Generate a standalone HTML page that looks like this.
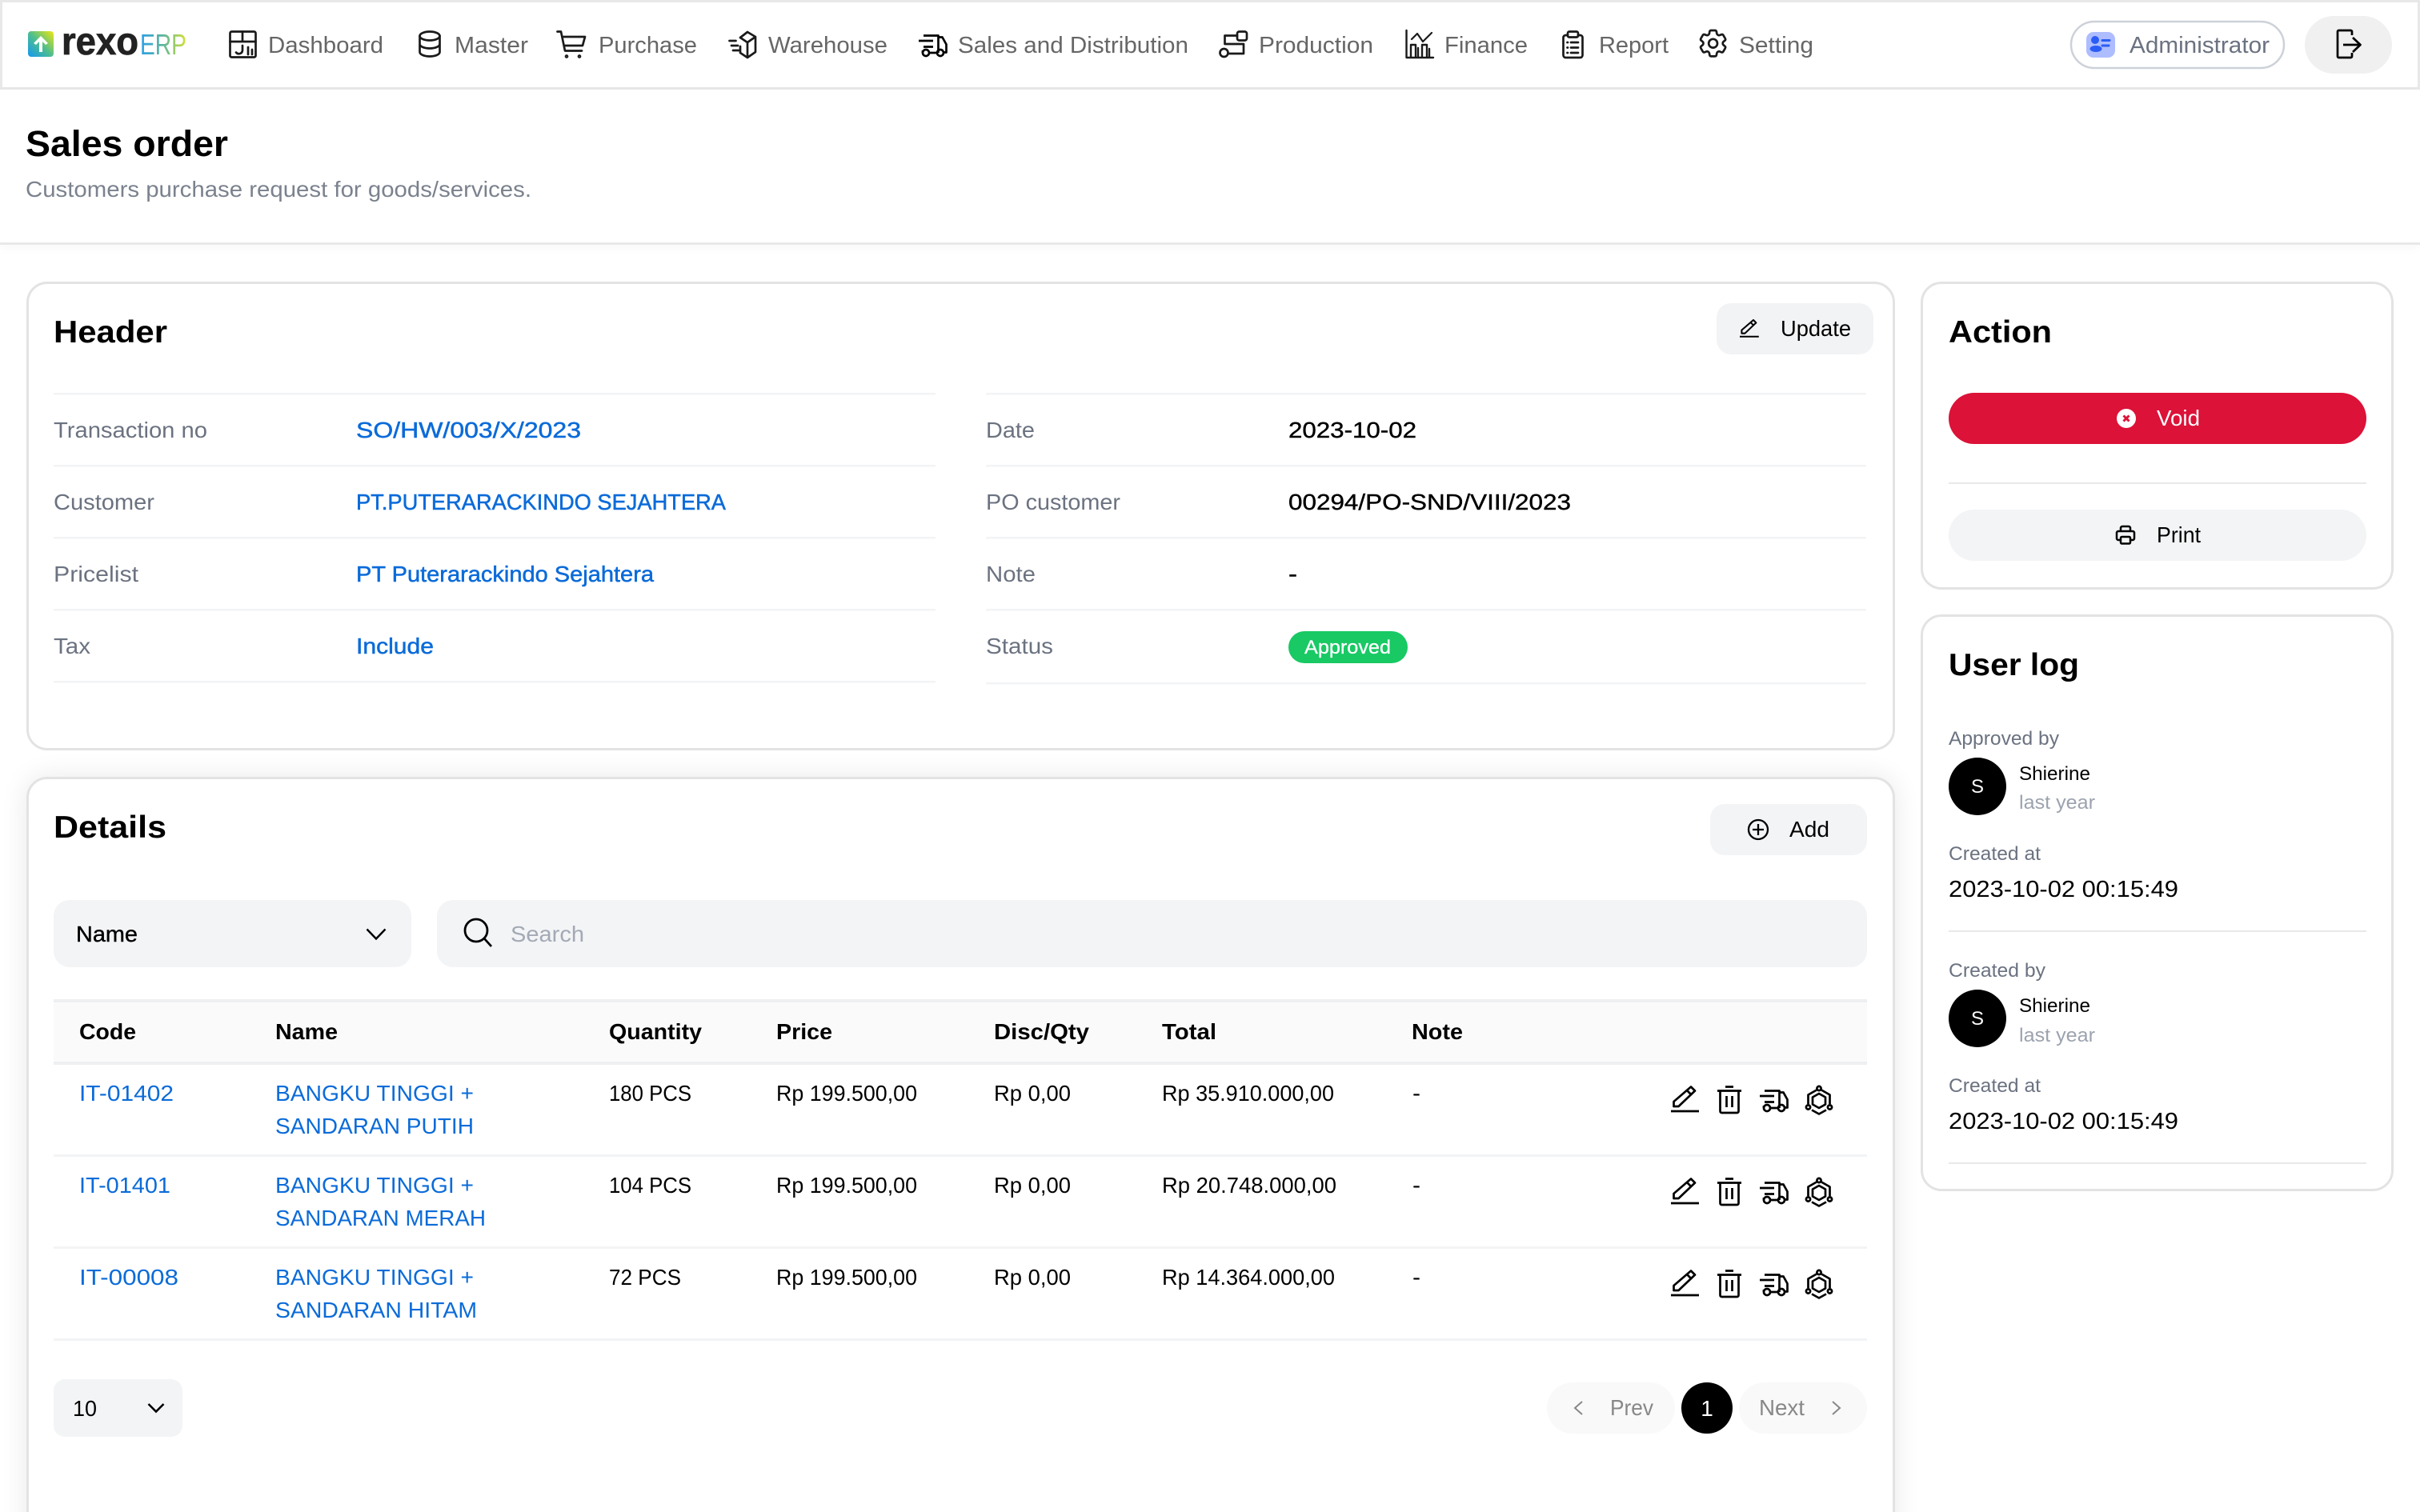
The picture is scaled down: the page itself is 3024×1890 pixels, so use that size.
<!DOCTYPE html>
<html lang="en"><head><meta charset="utf-8"><title>Sales order</title>
<style>
html,body{margin:0;padding:0;background:#fff;width:3024px;height:1890px;overflow:hidden}
#w{position:relative;width:3024px;height:1890px;overflow:hidden;background:#fff}
.a{position:absolute;box-sizing:border-box}
svg{position:absolute;left:0;top:0;display:block}
text{font-family:"Liberation Sans",sans-serif;font-size:28px;fill:#000}
.nav{fill:#666;font-size:28.5px}
.lab{fill:#6b7280}
.blue{fill:#0b6bd9}
.bm{fill:#0b6bd9;stroke:#0b6bd9;stroke-width:.5px}
.k{stroke:#000;stroke-width:.4px}
.t{font-weight:700;font-size:39px}
.s{font-size:24px}
.i{fill:none;stroke:#1a1a1a;stroke-width:2.700;stroke-linecap:round;stroke-linejoin:round}
.b{fill:none;stroke:#000;stroke-width:2.700;stroke-linecap:butt;stroke-linejoin:round}
</style></head><body><div id="w">
<div class="a" style="left:0;top:0;width:3024px;height:112px;background:#fff;border:3px solid #e8e8e8"></div>
<div class="a" style="left:0;top:112px;width:3024px;height:194px;background:#fff;border-bottom:3px solid #e9e9e9;box-shadow:0 3px 12px rgba(0,0,0,.035)"></div>
<div class="a" style="left:33px;top:352px;width:2335px;height:586px;background:#fff;border:3px solid #e3e3e3;border-radius:26px"></div>
<div class="a" style="left:33px;top:971px;width:2335px;height:1000px;background:#fff;border:3px solid #e3e3e3;border-radius:26px;box-shadow:0 0 34px rgba(0,0,0,.09)"></div>
<div class="a" style="left:2400px;top:352px;width:591px;height:385px;background:#fff;border:3px solid #e3e3e3;border-radius:26px"></div>
<div class="a" style="left:2400px;top:768px;width:591px;height:721px;background:#fff;border:3px solid #e3e3e3;border-radius:26px"></div>

<svg width="3024" height="1890" viewBox="0 0 3024 1890" xmlns="http://www.w3.org/2000/svg">
<defs>
<linearGradient id="lg" x1="0" y1="1" x2="1" y2="0"><stop offset="0" stop-color="#1597f2"/><stop offset=".5" stop-color="#4fbf8c"/><stop offset="1" stop-color="#eee60f"/></linearGradient>
<linearGradient id="eg" gradientUnits="userSpaceOnUse" x1="175" y1="0" x2="233" y2="0"><stop offset="0" stop-color="#2b9fe8"/><stop offset=".5" stop-color="#5db59a"/><stop offset="1" stop-color="#d5e235"/></linearGradient>
<g id="pen"><path class="b" d="M3.500 26h6L30 6.500 25 1.500 3.500 20zM20 6l5.500 5.500"/><path class="b" d="M0 32h35"/></g>
<g id="trash"><path class="b" d="M10 1.500h10M0 6.500h30M3.500 6.500V32a2 2 0 0 0 2 2h19a2 2 0 0 0 2-2V6.500M11.500 13v14M18.500 13v14"/></g>
<g id="truck"><path class="b" d="M6 1.500h18.500V23M0 8h18M6 15.500h12M13 23h10M5 23V20M25 3.500h4.500l5 9V22.500h-3"/><circle class="b" cx="9" cy="23" r="4"/><circle class="b" cx="27" cy="23" r="4"/></g>
<g id="hex"><path class="b" d="M17 10l8 4.500v9L17 28l-8-4.500v-9z"/><circle class="b" cx="17" cy="3.500" r="2.600"/><circle class="b" cx="3.500" cy="27" r="2.600"/><circle class="b" cx="30.500" cy="27" r="2.600"/><path class="b" d="M20 5.500l10.500 6V23M14 5.500L3.500 11.500V23M8 30.500l9 5 9-5"/></g>
</defs>

<!-- logo -->
<rect x="35" y="39" width="32" height="32" rx="4" fill="url(#lg)"/>
<path d="M51 45l9 9-3 2-4-4v13h-4V52l-4 4-3-2z" fill="#fff"/>
<text x="77" y="68" textLength="96" lengthAdjust="spacingAndGlyphs" style="font-size:48px;font-weight:700;fill:#222;stroke:#222;stroke-width:.8px">rexo</text>
<text x="175" y="68" textLength="58" lengthAdjust="spacingAndGlyphs" style="font-size:36px;fill:url(#eg)">ERP</text>

<!-- nav icons -->
<g class="i" transform="translate(286,38)"><rect x="1.500" y="1.500" width="32" height="32" rx="2"/><path d="M1.500 14h32M17 1.500V14M17 19v6a4.500 4.500 0 0 1-8 2.500M24 21v9M29 24v6"/></g>
<g class="i" transform="translate(523,38)"><ellipse cx="14" cy="7" rx="12.500" ry="5.500"/><path d="M1.500 7v20c0 3 5.500 5.500 12.500 5.500S26.500 30 26.500 27V7M1.500 17c0 3 5.500 5.500 12.500 5.500S26.500 20 26.500 17"/></g>
<g class="i" transform="translate(695,38)"><path d="M1.500 1.500h4.500l5 24h21M8 8h28l-3 11H10"/><circle cx="13" cy="32.500" r="1"/><circle cx="29" cy="32.500" r="1"/></g>
<g class="i" transform="translate(910,38)"><path d="M24 2l10 6v19l-10 7-9-6v-8M15 9l9-7M15 9l9 6 10-7M24 15v19M1.500 13h8M4 19h8M6 25h7"/></g>
<g transform="translate(1148,43)"><use href="#truck"/></g>
<g class="i" transform="translate(1523,38)"><rect x="23" y="1.500" width="12" height="11" rx="2.500"/><circle cx="6.500" cy="28" r="5"/><path d="M23 6.500H7.500V17h23.500v12H12"/></g>
<g class="i" transform="translate(1756,38)"><path d="M1.500 0v34H35M7 34V18h6v16M16 34V22M21 34V18h6v16M30 34V23" stroke-width="2.400"/><path d="M8 11l7-7 7 10 11-11" stroke-width="2.200"/></g>
<g class="i" transform="translate(1952,38)"><path d="M7 6H4.500a3 3 0 0 0-3 3v22a3 3 0 0 0 3 3h18a3 3 0 0 0 3-3V9a3 3 0 0 0-3-3H20"/><rect x="7" y="1.500" width="13" height="7" rx="2"/><path d="M11 15h9M11 21.500h9M11 28h9M6.500 15h.5M6.500 21.500h.5M6.500 28h.5"/></g>
<g transform="translate(2119,32.600) scale(1.800)" fill="none" stroke="#1a1a1a" stroke-width="1.500" stroke-linejoin="round"><path d="M9.594 3.940c.09-.542.56-.94 1.110-.94h2.593c.55 0 1.020.398 1.110.94l.213 1.281c.063.374.313.686.645.87.074.04.147.083.22.127.324.196.72.257 1.075.124l1.217-.456a1.125 1.125 0 0 1 1.370.49l1.296 2.247a1.125 1.125 0 0 1-.26 1.431l-1.003.827c-.293.24-.438.613-.431.992a6.759 6.759 0 0 1 0 .255c-.007.378.138.75.43.99l1.005.828c.424.35.534.954.26 1.430l-1.298 2.247a1.125 1.125 0 0 1-1.369.491l-1.217-.456c-.355-.133-.75-.072-1.076.124a6.570 6.570 0 0 1-.22.128c-.331.183-.581.495-.644.869l-.213 1.280c-.09.543-.56.941-1.110.941h-2.594c-.55 0-1.020-.398-1.110-.94l-.213-1.281c-.062-.374-.312-.686-.644-.87a6.520 6.520 0 0 1-.22-.127c-.325-.196-.72-.257-1.076-.124l-1.217.456a1.125 1.125 0 0 1-1.369-.49l-1.297-2.247a1.125 1.125 0 0 1 .26-1.431l1.004-.827c.292-.24.437-.613.43-.992a6.932 6.932 0 0 1 0-.255c.007-.378-.138-.75-.43-.99l-1.004-.828a1.125 1.125 0 0 1-.26-1.430l1.297-2.247a1.125 1.125 0 0 1 1.370-.491l1.216.456c.356.133.751.072 1.076-.124.072-.044.146-.087.22-.128.332-.183.582-.495.644-.869l.214-1.281z"/><circle cx="12" cy="12" r="3"/></g>

<!-- nav text -->
<text class="nav" x="335" y="66" textLength="144" lengthAdjust="spacingAndGlyphs">Dashboard</text>
<text class="nav" x="568" y="66" textLength="92" lengthAdjust="spacingAndGlyphs">Master</text>
<text class="nav" x="748" y="66" textLength="123" lengthAdjust="spacingAndGlyphs">Purchase</text>
<text class="nav" x="960" y="66" textLength="149" lengthAdjust="spacingAndGlyphs">Warehouse</text>
<text class="nav" x="1197" y="66" textLength="288" lengthAdjust="spacingAndGlyphs">Sales and Distribution</text>
<text class="nav" x="1573" y="66" textLength="143" lengthAdjust="spacingAndGlyphs">Production</text>
<text class="nav" x="1805" y="66" textLength="104" lengthAdjust="spacingAndGlyphs">Finance</text>
<text class="nav" x="1998" y="66" textLength="87" lengthAdjust="spacingAndGlyphs">Report</text>
<text class="nav" x="2173" y="66" textLength="93" lengthAdjust="spacingAndGlyphs">Setting</text>

<!-- admin -->
<rect x="2588" y="27" width="266" height="58" rx="29" fill="#fff" stroke="#cdd1d9" stroke-width="2.500"/>
<rect x="2607" y="40" width="36" height="32" rx="9" fill="#aebdff"/>
<circle cx="2618" cy="50" r="5" fill="#2b5cf5"/><ellipse cx="2619" cy="61" rx="7.500" ry="4" fill="#2b5cf5"/>
<path d="M2627 50.500h9M2627 57h8" stroke="#2b5cf5" stroke-width="3" stroke-linecap="round"/>
<text x="2661" y="66" textLength="175" lengthAdjust="spacingAndGlyphs" style="fill:#6b7280;font-size:29px">Administrator</text>
<rect x="2880" y="20" width="109" height="72" rx="36" fill="#f0f0f0"/>
<path class="b" d="M2939 44v-4.500a1.500 1.500 0 0 0-1.500-1.500h-15a1.500 1.500 0 0 0-1.500 1.500v31a1.500 1.500 0 0 0 1.500 1.500h15a1.500 1.500 0 0 0 1.500-1.500V66M2928 56h21M2940 47l9.500 9-9.500 9"/>

<!-- title -->
<text x="32" y="195" textLength="253" lengthAdjust="spacingAndGlyphs" style="font-size:45px;font-weight:700">Sales order</text>
<text x="32" y="246" textLength="632" lengthAdjust="spacingAndGlyphs" style="font-size:28px;fill:#7b828e">Customers purchase request for goods/services.</text>

<!-- header card -->
<text class="t" x="67" y="428" textLength="142" lengthAdjust="spacingAndGlyphs">Header</text>
<rect x="2145" y="379" width="196" height="64" rx="18" fill="#f2f3f5"/>
<g transform="translate(2174,399) scale(.68)"><path d="M3.500 26h6L30 6.500 25 1.500 3.500 20zM20 6l5.500 5.500M0 32h35" fill="none" stroke="#000" stroke-width="3" stroke-linejoin="round"/></g>
<text x="2225" y="420" textLength="88" lengthAdjust="spacingAndGlyphs">Update</text>

<g fill="#f3f4f6">
<rect x="67" y="491" width="1102" height="2.500"/><rect x="67" y="581" width="1102" height="2.500"/><rect x="67" y="671" width="1102" height="2.500"/><rect x="67" y="761" width="1102" height="2.500"/><rect x="67" y="851" width="1102" height="2.500"/>
<rect x="1232" y="491" width="1100" height="2.500"/><rect x="1232" y="581" width="1100" height="2.500"/><rect x="1232" y="671" width="1100" height="2.500"/><rect x="1232" y="761" width="1100" height="2.500"/><rect x="1232" y="853" width="1100" height="2.500"/>
</g>

<text class="lab" x="67" y="547" textLength="192" lengthAdjust="spacingAndGlyphs">Transaction no</text>
<text class="lab" x="67" y="637" textLength="126" lengthAdjust="spacingAndGlyphs">Customer</text>
<text class="lab" x="67" y="727" textLength="106" lengthAdjust="spacingAndGlyphs">Pricelist</text>
<text class="lab" x="67" y="817" textLength="46" lengthAdjust="spacingAndGlyphs">Tax</text>
<text class="bm" x="445" y="547" textLength="281" lengthAdjust="spacingAndGlyphs">SO/HW/003/X/2023</text>
<text class="bm" x="445" y="637" textLength="462" lengthAdjust="spacingAndGlyphs">PT.PUTERARACKINDO SEJAHTERA</text>
<text class="bm" x="445" y="727" textLength="372" lengthAdjust="spacingAndGlyphs">PT Puterarackindo Sejahtera</text>
<text class="bm" x="445" y="817" textLength="97" lengthAdjust="spacingAndGlyphs">Include</text>

<text class="lab" x="1232" y="547" textLength="61" lengthAdjust="spacingAndGlyphs">Date</text>
<text class="lab" x="1232" y="637" textLength="168" lengthAdjust="spacingAndGlyphs">PO customer</text>
<text class="lab" x="1232" y="727" textLength="62" lengthAdjust="spacingAndGlyphs">Note</text>
<text class="lab" x="1232" y="817" textLength="84" lengthAdjust="spacingAndGlyphs">Status</text>
<text class="k" x="1610" y="547" textLength="160" lengthAdjust="spacingAndGlyphs">2023-10-02</text>
<text class="k" x="1610" y="637" textLength="353" lengthAdjust="spacingAndGlyphs">00294/PO-SND/VIII/2023</text>
<text class="k" x="1610" y="727" textLength="11" lengthAdjust="spacingAndGlyphs">-</text>
<rect x="1610" y="789" width="149" height="40" rx="20" fill="#18c964"/>
<text x="1630" y="817" textLength="108" lengthAdjust="spacingAndGlyphs" style="font-size:24px;fill:#fff;stroke:#fff;stroke-width:.3px">Approved</text>

<!-- action -->
<text class="t" x="2435" y="428" textLength="129" lengthAdjust="spacingAndGlyphs">Action</text>
<rect x="2435" y="491" width="522" height="64" rx="32" fill="#dc1238"/>
<circle cx="2657" cy="523" r="12" fill="#fff"/><path d="M2653.500 519.500l7 7M2660.500 519.500l-7 7" stroke="#dc1238" stroke-width="3"/>
<text x="2695" y="532" textLength="54" lengthAdjust="spacingAndGlyphs" style="fill:#fff">Void</text>
<rect x="2435" y="603" width="522" height="2" fill="#e8e8e8"/>
<rect x="2435" y="637" width="522" height="64" rx="32" fill="#f3f4f6"/>
<g transform="translate(2644,657)" fill="none" stroke="#000" stroke-width="2.500" stroke-linejoin="round"><path d="M6 7V3a2 2 0 0 1 2-2h8a2 2 0 0 1 2 2v4M6 18H3a2 2 0 0 1-2-2V9a2 2 0 0 1 2-2h18a2 2 0 0 1 2 2v7a2 2 0 0 1-2 2h-3"/><rect x="6" y="14" width="12" height="8.500" rx="1.500"/></g>
<text x="2695" y="678" textLength="55" lengthAdjust="spacingAndGlyphs">Print</text>

<!-- user log -->
<text class="t" x="2435" y="844" textLength="163" lengthAdjust="spacingAndGlyphs">User log</text>
<text class="s lab" x="2435" y="931" textLength="138" lengthAdjust="spacingAndGlyphs">Approved by</text>
<circle cx="2471" cy="983" r="36" fill="#000"/>
<text class="s" x="2471" y="991" text-anchor="middle" style="fill:#fff">S</text>
<text class="s" x="2523" y="975" textLength="89" lengthAdjust="spacingAndGlyphs">Shierine</text>
<text class="s" x="2523" y="1011" textLength="95" lengthAdjust="spacingAndGlyphs" style="fill:#9ca3af">last year</text>
<text class="s lab" x="2435" y="1075" textLength="115" lengthAdjust="spacingAndGlyphs">Created at</text>
<text x="2435" y="1121" textLength="287" lengthAdjust="spacingAndGlyphs" style="font-size:29px">2023-10-02 00:15:49</text>
<rect x="2435" y="1163" width="522" height="2" fill="#e8e8e8"/>
<text class="s lab" x="2435" y="1221" textLength="121" lengthAdjust="spacingAndGlyphs">Created by</text>
<circle cx="2471" cy="1273" r="36" fill="#000"/>
<text class="s" x="2471" y="1281" text-anchor="middle" style="fill:#fff">S</text>
<text class="s" x="2523" y="1265" textLength="89" lengthAdjust="spacingAndGlyphs">Shierine</text>
<text class="s" x="2523" y="1302" textLength="95" lengthAdjust="spacingAndGlyphs" style="fill:#9ca3af">last year</text>
<text class="s lab" x="2435" y="1365" textLength="115" lengthAdjust="spacingAndGlyphs">Created at</text>
<text x="2435" y="1411" textLength="287" lengthAdjust="spacingAndGlyphs" style="font-size:29px">2023-10-02 00:15:49</text>
<rect x="2435" y="1453" width="522" height="2" fill="#e8e8e8"/>

<!-- details -->
<text class="t" x="67" y="1047" textLength="141" lengthAdjust="spacingAndGlyphs">Details</text>
<rect x="2137" y="1005" width="196" height="64" rx="18" fill="#f3f4f6"/>
<g fill="none" stroke="#000" stroke-width="2.300"><circle cx="2197" cy="1037" r="12"/><path d="M2197 1030v14M2190 1037h14"/></g>
<text x="2236" y="1046" textLength="50" lengthAdjust="spacingAndGlyphs">Add</text>

<rect x="67" y="1125" width="447" height="84" rx="20" fill="#f3f4f6"/>
<text class="k" x="95" y="1177" textLength="77" lengthAdjust="spacingAndGlyphs">Name</text>
<path d="M458.500 1161.500L470 1173.500l11.500-12" fill="none" stroke="#000" stroke-width="2.500"/>
<rect x="546" y="1125" width="1787" height="84" rx="20" fill="#f3f4f6"/>
<circle cx="595" cy="1163" r="14" fill="none" stroke="#000" stroke-width="2.800"/><path d="M605 1173l9 10" stroke="#000" stroke-width="2.800"/>
<text x="638" y="1177" textLength="92" lengthAdjust="spacingAndGlyphs" style="fill:#a3a9b5">Search</text>

<!-- table -->
<rect x="67" y="1249" width="2266" height="82" fill="#fafafb"/>
<rect x="67" y="1249" width="2266" height="4" fill="#eeeff1"/><rect x="67" y="1327" width="2266" height="4" fill="#eeeff1"/>
<text x="99" y="1299" textLength="71" lengthAdjust="spacingAndGlyphs" style="font-weight:700">Code</text>
<text x="344" y="1299" textLength="78" lengthAdjust="spacingAndGlyphs" style="font-weight:700">Name</text>
<text x="761" y="1299" textLength="116" lengthAdjust="spacingAndGlyphs" style="font-weight:700">Quantity</text>
<text x="970" y="1299" textLength="70" lengthAdjust="spacingAndGlyphs" style="font-weight:700">Price</text>
<text x="1242" y="1299" textLength="119" lengthAdjust="spacingAndGlyphs" style="font-weight:700">Disc/Qty</text>
<text x="1452" y="1299" textLength="68" lengthAdjust="spacingAndGlyphs" style="font-weight:700">Total</text>
<text x="1764" y="1299" textLength="64" lengthAdjust="spacingAndGlyphs" style="font-weight:700">Note</text>

<!-- row 1 -->
<text class="blue" x="99" y="1376" textLength="118" lengthAdjust="spacingAndGlyphs">IT-01402</text>
<text class="blue" x="344" y="1376" textLength="248" lengthAdjust="spacingAndGlyphs">BANGKU TINGGI +</text>
<text class="blue" x="344" y="1417" textLength="248" lengthAdjust="spacingAndGlyphs">SANDARAN PUTIH</text>
<text x="761" y="1376" textLength="103" lengthAdjust="spacingAndGlyphs">180 PCS</text>
<text x="970" y="1376" textLength="176" lengthAdjust="spacingAndGlyphs">Rp 199.500,00</text>
<text x="1242" y="1376" textLength="96" lengthAdjust="spacingAndGlyphs">Rp 0,00</text>
<text x="1452" y="1376" textLength="215" lengthAdjust="spacingAndGlyphs">Rp 35.910.000,00</text>
<text x="1765" y="1376" textLength="10" lengthAdjust="spacingAndGlyphs">-</text>
<use href="#pen" x="2088" y="1357"/><use href="#trash" x="2146" y="1357"/><use href="#truck" x="2199" y="1362"/><use href="#hex" x="2256" y="1357"/>
<rect x="67" y="1443" width="2266" height="3" fill="#f3f4f6"/>

<!-- row 2 -->
<text class="blue" x="99" y="1491" textLength="114" lengthAdjust="spacingAndGlyphs">IT-01401</text>
<text class="blue" x="344" y="1491" textLength="248" lengthAdjust="spacingAndGlyphs">BANGKU TINGGI +</text>
<text class="blue" x="344" y="1532" textLength="263" lengthAdjust="spacingAndGlyphs">SANDARAN MERAH</text>
<text x="761" y="1491" textLength="103" lengthAdjust="spacingAndGlyphs">104 PCS</text>
<text x="970" y="1491" textLength="176" lengthAdjust="spacingAndGlyphs">Rp 199.500,00</text>
<text x="1242" y="1491" textLength="96" lengthAdjust="spacingAndGlyphs">Rp 0,00</text>
<text x="1452" y="1491" textLength="218" lengthAdjust="spacingAndGlyphs">Rp 20.748.000,00</text>
<text x="1765" y="1491" textLength="10" lengthAdjust="spacingAndGlyphs">-</text>
<use href="#pen" x="2088" y="1472"/><use href="#trash" x="2146" y="1472"/><use href="#truck" x="2199" y="1477"/><use href="#hex" x="2256" y="1472"/>
<rect x="67" y="1558" width="2266" height="3" fill="#f3f4f6"/>

<!-- row 3 -->
<text class="blue" x="99" y="1606" textLength="124" lengthAdjust="spacingAndGlyphs">IT-00008</text>
<text class="blue" x="344" y="1606" textLength="248" lengthAdjust="spacingAndGlyphs">BANGKU TINGGI +</text>
<text class="blue" x="344" y="1647" textLength="252" lengthAdjust="spacingAndGlyphs">SANDARAN HITAM</text>
<text x="761" y="1606" textLength="90" lengthAdjust="spacingAndGlyphs">72 PCS</text>
<text x="970" y="1606" textLength="176" lengthAdjust="spacingAndGlyphs">Rp 199.500,00</text>
<text x="1242" y="1606" textLength="96" lengthAdjust="spacingAndGlyphs">Rp 0,00</text>
<text x="1452" y="1606" textLength="216" lengthAdjust="spacingAndGlyphs">Rp 14.364.000,00</text>
<text x="1765" y="1606" textLength="10" lengthAdjust="spacingAndGlyphs">-</text>
<use href="#pen" x="2088" y="1587"/><use href="#trash" x="2146" y="1587"/><use href="#truck" x="2199" y="1592"/><use href="#hex" x="2256" y="1587"/>
<rect x="67" y="1673" width="2266" height="3" fill="#f3f4f6"/>

<!-- pagination -->
<rect x="67" y="1724" width="161" height="72" rx="14" fill="#f3f4f6"/>
<text x="91" y="1770" textLength="30" lengthAdjust="spacingAndGlyphs">10</text>
<path d="M185.500 1755l9.500 9.500 9.500-9.500" fill="none" stroke="#000" stroke-width="2.600"/>
<rect x="1933" y="1728" width="160" height="64" rx="32" fill="#f9f9f9"/>
<path d="M1977 1752l-9 8 9 8" fill="none" stroke="#888" stroke-width="2"/>
<text x="2012" y="1769" textLength="54" lengthAdjust="spacingAndGlyphs" style="fill:#888">Prev</text>
<circle cx="2133" cy="1760" r="32" fill="#000"/>
<text x="2133" y="1770" text-anchor="middle" style="fill:#fff">1</text>
<rect x="2173" y="1728" width="160" height="64" rx="32" fill="#f9f9f9"/>
<text x="2198" y="1769" textLength="57" lengthAdjust="spacingAndGlyphs" style="fill:#888">Next</text>
<path d="M2290 1752l9 8-9 8" fill="none" stroke="#888" stroke-width="2"/>
</svg>
</div></body></html>
